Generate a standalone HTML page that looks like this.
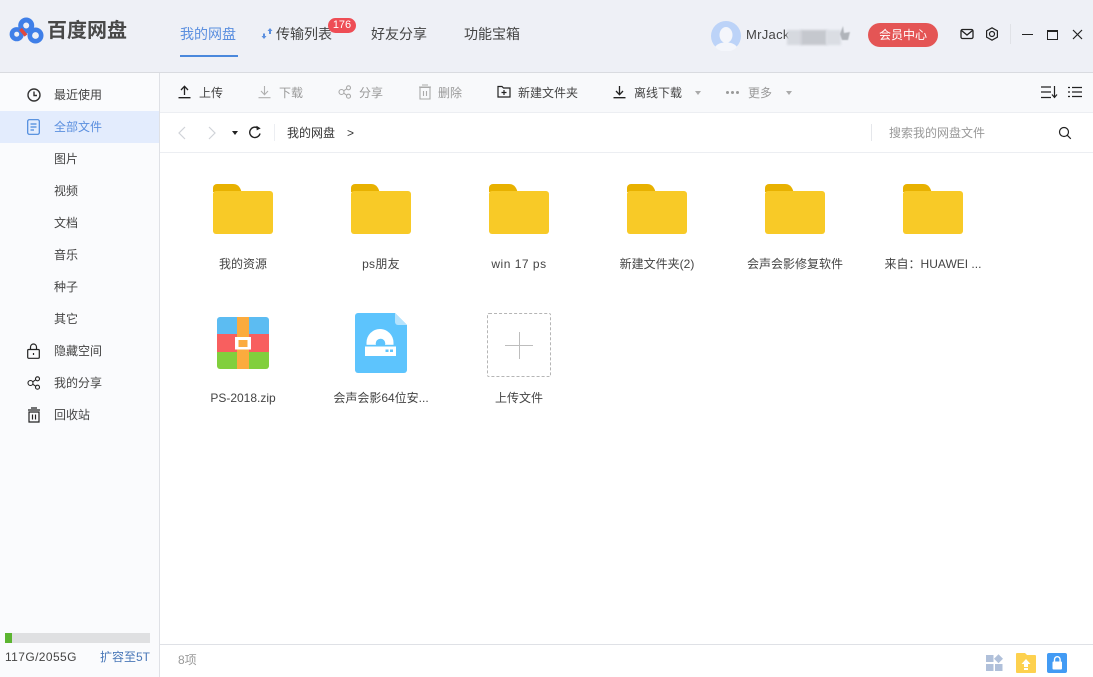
<!DOCTYPE html>
<html lang="zh-CN"><head><meta charset="utf-8"><title>百度网盘</title>
<style>
html,body{margin:0;padding:0;width:1093px;height:677px;overflow:hidden;background:#fff}
body{position:relative;font-family:"Liberation Sans","Noto Sans CJK SC",sans-serif;font-size:12px;color:#424e67}
.a,svg{position:absolute}
.t{position:absolute;white-space:nowrap;line-height:16px;color:#444}
.c{text-align:center;width:120px}
.nav{font-size:14px;line-height:18px;color:#444}
.g{color:#999}
</style></head><body>
<div class="a" style="left:0;top:0;width:1093px;height:72px;background:#eef0f6;border-bottom:1px solid #d9dbe0"></div>
<div class="a" style="left:0;top:73px;width:159px;height:604px;background:#fafbfd;border-right:1px solid #dfe1e6"></div>
<div class="a" style="left:160px;top:73px;width:933px;height:39px;background:#f8f9fb;border-bottom:1px solid #eceef2"></div>
<div class="a" style="left:160px;top:152px;width:933px;height:1px;background:#eceef2"></div>
<div class="a" style="left:160px;top:644px;width:933px;height:1px;background:#dfe1e6"></div>
<div class="a" style="left:0;top:111px;width:159px;height:32px;background:#e3ecfd"></div>

<svg style="left:9px;top:17px" width="36" height="30" viewBox="0 0 36 30" fill="none"><circle cx="7.700" cy="17.200" r="4.800" stroke="#3f7fe8" stroke-width="4.600"/><circle cx="26.500" cy="18.500" r="5.700" stroke="#3f7fe8" stroke-width="4.600"/><circle cx="17.200" cy="8.500" r="5.500" stroke="#3f7fe8" stroke-width="5"/><path d="M11.500 12l5.500 6.500" stroke="#e0483e" stroke-width="3.600"/></svg>
<div class="t" style="left:47px;top:19px;font-size:20px;line-height:24px;font-weight:bold;color:#484848">百度网盘</div>

<div class="t nav" style="left:180px;top:25px;color:#5b8fdf">我的网盘</div>
<svg style="left:261px;top:28px" width="12" height="12" viewBox="0 0 12 12" fill="#5b8fdf"><path d="M6.500 3L9 0l2.500 3H10v3H8V3zM.5 8H2V5.500h2V8h1.500L3 11z"/></svg>
<div class="t nav" style="left:276px;top:25px">传输列表</div>
<div class="a" style="left:328px;top:18px;width:28px;height:15px;border-radius:8px;background:#ee4d55;color:#fff;font-size:11px;line-height:15px;text-align:center">176</div>
<div class="t nav" style="left:371px;top:25px">好友分享</div>
<div class="t nav" style="left:464px;top:25px">功能宝箱</div>

<svg style="left:711px;top:21px" width="30" height="30" viewBox="0 0 30 30"><circle cx="15" cy="15" r="15" fill="#bcd3f8"/><ellipse cx="15" cy="14" rx="6.500" ry="8" fill="#f4f6fb"/><path d="M4 26c3-4 7-4.500 11-4.500s8 .5 11 4.500a15 15 0 0 1-22 0z" fill="#f4f6fb"/></svg>
<div class="t" style="left:746px;top:27px;font-size:13px;letter-spacing:.3px">MrJack</div>
<div class="a" style="left:787px;top:30px;width:15px;height:15px;background:#d6d9df;filter:blur(1px)"></div>
<div class="a" style="left:801px;top:30px;width:26px;height:15px;background:#c5c8ce;filter:blur(1px)"></div>
<div class="a" style="left:826px;top:30px;width:15px;height:15px;background:#dadde3;filter:blur(1px)"></div>
<svg style="left:838px;top:26px;filter:blur(.5px)" width="14" height="16" viewBox="0 0 14 16" fill="#b0b4ba"><path d="M5 0l1 7 6-1-2 8H4L2 8z"/></svg>
<div class="a" style="left:868px;top:23px;width:70px;height:24px;border-radius:12px;background:#e45555;color:#fff;font-size:12px;line-height:24px;text-align:center">会员中心</div>
<svg style="left:960px;top:28px" width="14" height="12" viewBox="0 0 14 12" fill="none" stroke="#222" stroke-width="1.300"><rect x="1" y="1.500" width="12" height="9" rx="1.500"/><path d="M1.500 2.500L7 7l5.500-4.500"/></svg>
<svg style="left:985px;top:27px" width="14" height="14" viewBox="0 0 14 14" fill="none" stroke="#222" stroke-width="1.200"><path d="M7 .8l5.400 3v6.400L7 13.200l-5.400-3V3.800z"/><circle cx="7" cy="7" r="2.500"/></svg>
<div class="a" style="left:1010px;top:24px;width:1px;height:20px;background:#e0e2e7"></div>
<div class="a" style="left:1022px;top:34px;width:11px;height:1px;background:#222"></div>
<div class="a" style="left:1047px;top:30px;width:9px;height:7px;border:1px solid #222;border-top-width:2px"></div>
<svg style="left:1072px;top:29px" width="11" height="11" viewBox="0 0 11 11" stroke="#222" stroke-width="1.200"><path d="M1 1l9 9M10 1l-9 9"/></svg>
<div class="a" style="left:180px;top:55px;width:58px;height:2px;background:#4a88dc"></div>

<svg style="left:177px;top:85px" width="15" height="14" viewBox="0 0 15 14" fill="none" stroke="#222" stroke-width="1.300"><path d="M7.500 10V1.500M4 5l3.500-3.700L11 5M1.500 12.700h12"/></svg>
<div class="t" style="left:199px;top:85px">上传</div>
<svg style="left:257px;top:85px" width="15" height="14" viewBox="0 0 15 14" fill="none" stroke="#b0b0b0" stroke-width="1.100"><path d="M7.500 1v8.500M4 6l3.500 3.700L11 6M1.500 12.700h12"/></svg>
<div class="t g" style="left:279px;top:85px">下载</div>
<svg style="left:338px;top:85px" width="14" height="14" viewBox="0 0 14 14" fill="none" stroke="#aaa" stroke-width="1.100"><circle cx="3.500" cy="7" r="2.500"/><circle cx="10.500" cy="2.800" r="2"/><circle cx="10.500" cy="11.200" r="2"/><path d="M5.700 5.800l3-2M5.700 8.200l3 2"/></svg>
<div class="t g" style="left:359px;top:85px">分享</div>
<svg style="left:418px;top:84px" width="14" height="16" viewBox="0 0 14 16" fill="none" stroke="#aaa" stroke-width="1.100"><path d="M1 3h12M4 1h6M2 3.500h10V15H2zM5.500 7v5M8.500 7v5"/></svg>
<div class="t g" style="left:438px;top:85px">删除</div>
<svg style="left:497px;top:85px" width="14" height="13" viewBox="0 0 14 13" fill="none" stroke="#222" stroke-width="1.200"><path d="M1 1.500h4l1.500 1.500H13v9H1zM7 5v5M4.500 7.500h5"/></svg>
<div class="t" style="left:518px;top:85px">新建文件夹</div>
<svg style="left:612px;top:85px" width="15" height="14" viewBox="0 0 15 14" fill="none" stroke="#222" stroke-width="1.300"><path d="M7.500 1v8.500M4 6l3.500 3.700L11 6M1.500 12.700h12"/></svg>
<div class="t" style="left:634px;top:85px">离线下载</div>
<div class="a" style="left:695px;top:91px;border:3.500px solid transparent;border-top:4px solid #aaa;border-bottom:0"></div>
<div class="a" style="left:726px;top:91px;width:3px;height:3px;border-radius:2px;background:#999;box-shadow:5px 0 #999,10px 0 #999"></div>
<div class="t g" style="left:748px;top:85px">更多</div>
<div class="a" style="left:786px;top:91px;border:3.500px solid transparent;border-top:4px solid #aaa;border-bottom:0"></div>
<svg style="left:1040px;top:85px" width="18" height="14" viewBox="0 0 18 14" fill="none" stroke="#222" stroke-width="1.200"><path d="M1 2h10M1 7h10M1 12.500h10M14.500 1v11M12 9.500l2.500 3 2.500-3"/></svg>
<svg style="left:1068px;top:86px" width="14" height="12" viewBox="0 0 14 12" fill="none" stroke="#222" stroke-width="1.200"><path d="M0 1.500h2M4 1.500h10M0 6h2M4 6h10M0 10.500h2M4 10.500h10"/></svg>

<svg style="left:177px;top:126px" width="10" height="14" viewBox="0 0 10 14" fill="none" stroke="#d0d3d8" stroke-width="1.200"><path d="M8 1L2 7l6 6"/></svg>
<svg style="left:207px;top:126px" width="10" height="14" viewBox="0 0 10 14" fill="none" stroke="#d0d3d8" stroke-width="1.200"><path d="M2 1l6 6-6 6"/></svg>
<div class="a" style="left:232px;top:131px;border:3px solid transparent;border-top:4px solid #222;border-bottom:0"></div>
<svg style="left:248px;top:125px" width="14" height="14" viewBox="0 0 14 14" fill="none" stroke="#222" stroke-width="1.400"><path d="M12 8.500A5.200 5.200 0 1 1 9.800 3"/><path d="M8.500.8l4.200 2.600-4 2z" fill="#222" stroke="none"/></svg>
<div class="a" style="left:274px;top:124px;width:1px;height:17px;background:#eceef2"></div>
<div class="t" style="left:287px;top:125px;color:#333">我的网盘</div>
<div class="t" style="left:347px;top:125px;color:#333">&gt;</div>
<div class="a" style="left:871px;top:124px;width:1px;height:17px;background:#e5e7eb"></div>
<div class="t g" style="left:889px;top:125px">搜索我的网盘文件</div>
<svg style="left:1058px;top:126px" width="14" height="14" viewBox="0 0 14 14" fill="none" stroke="#222" stroke-width="1.200"><circle cx="6" cy="6" r="4.500"/><path d="M9.300 9.300l3.500 3.500"/></svg>

<svg style="left:27px;top:88px" width="14" height="14" viewBox="0 0 14 14" fill="none" stroke="#333" stroke-width="1.400"><circle cx="7" cy="7" r="6"/><path d="M7 3.500V7.500H10"/></svg>
<div class="t" style="left:54px;top:87px">最近使用</div>
<svg style="left:27px;top:119px" width="13" height="16" viewBox="0 0 13 16" fill="none" stroke="#4a88dc" stroke-width="1.200"><rect x=".7" y=".7" width="11.600" height="14.600" rx="1.500"/><path d="M3.500 5h6M3.500 8h6M3.500 11h3.500"/></svg>
<div class="t" style="left:54px;top:119px;color:#5b8fdf">全部文件</div>
<div class="t" style="left:54px;top:151px">图片</div>
<div class="t" style="left:54px;top:183px">视频</div>
<div class="t" style="left:54px;top:215px">文档</div>
<div class="t" style="left:54px;top:247px">音乐</div>
<div class="t" style="left:54px;top:279px">种子</div>
<div class="t" style="left:54px;top:311px">其它</div>
<svg style="left:27px;top:343px" width="13" height="16" viewBox="0 0 13 16" fill="none" stroke="#222" stroke-width="1.200"><rect x=".7" y="6.500" width="11.600" height="8.800" rx="1"/><path d="M3.500 6.500V4a3 3 0 0 1 6 0v2.500M6.500 10v2"/></svg>
<div class="t" style="left:54px;top:343px">隐藏空间</div>
<svg style="left:27px;top:376px" width="14" height="14" viewBox="0 0 14 14" fill="none" stroke="#222" stroke-width="1.100"><circle cx="3.500" cy="7" r="2.500"/><circle cx="10.500" cy="2.800" r="2"/><circle cx="10.500" cy="11.200" r="2"/><path d="M5.700 5.800l3-2M5.700 8.200l3 2"/></svg>
<div class="t" style="left:54px;top:375px">我的分享</div>
<svg style="left:27px;top:407px" width="14" height="16" viewBox="0 0 14 16" fill="none" stroke="#222" stroke-width="1.200"><path d="M1 3h12M4 1h6M2 5h10v10H2zM5.500 7.500v5M8.500 7.500v5"/></svg>
<div class="t" style="left:54px;top:407px">回收站</div>

<div class="a" style="left:5px;top:633px;width:145px;height:10px;background:#dfe0e2"></div>
<div class="a" style="left:5px;top:633px;width:7px;height:10px;background:#5cb531"></div>
<div class="t" style="left:5px;top:649px;color:#444;letter-spacing:.4px">117G/2055G</div>
<div class="t" style="left:100px;top:649px;color:#4a78b8">扩容至5T</div>
<div class="t g" style="left:178px;top:652px">8项</div>

<svg width="0" height="0" style="left:0;top:0"><defs><g id="f"><path d="M0 4a4 4 0 0 1 4-4h16c4 0 7 2 8.500 8H0z" fill="#e8b100"/><rect y="7" width="60" height="43" rx="3" fill="#f8ca27"/></g></defs></svg>
<svg style="left:213px;top:184px" width="60" height="50"><use href="#f"/></svg>
<svg style="left:351px;top:184px" width="60" height="50"><use href="#f"/></svg>
<svg style="left:489px;top:184px" width="60" height="50"><use href="#f"/></svg>
<svg style="left:627px;top:184px" width="60" height="50"><use href="#f"/></svg>
<svg style="left:765px;top:184px" width="60" height="50"><use href="#f"/></svg>
<svg style="left:903px;top:184px" width="60" height="50"><use href="#f"/></svg>

<div class="t c" style="left:183px;top:256px">我的资源</div>
<div class="t c" style="left:321px;top:256px;letter-spacing:.3px">ps朋友</div>
<div class="t c" style="left:459px;top:256px;letter-spacing:.5px">win 17 ps</div>
<div class="t c" style="left:597px;top:256px">新建文件夹(2)</div>
<div class="t c" style="left:735px;top:256px">会声会影修复软件</div>
<div class="t c" style="left:873px;top:256px">来自：HUAWEI ...</div>

<svg style="left:217px;top:317px" width="52" height="52" viewBox="0 0 52 52"><path d="M0 17V3a3 3 0 0 1 3-3h46a3 3 0 0 1 3 3v14z" fill="#5cbcf2"/><rect y="17" width="52" height="18" fill="#f85f5f"/><path d="M0 35h52v14a3 3 0 0 1-3 3H3a3 3 0 0 1-3-3z" fill="#81cf3d"/><rect x="20" width="12" height="52" fill="#fbab3e"/><rect x="18" y="20" width="16" height="12.500" fill="#fff"/><rect x="21.500" y="23" width="9" height="7" fill="#fbab3e"/></svg>
<svg style="left:355px;top:313px" width="52" height="60" viewBox="0 0 52 60"><path d="M3 0h37l12 12v45a3 3 0 0 1-3 3H3a3 3 0 0 1-3-3V3a3 3 0 0 1 3-3z" fill="#5dc4fd"/><path d="M40 0l12 12H43a3 3 0 0 1-3-3z" fill="#b5e3fd"/><path d="M11.500 32v-2.500a13.500 13.500 0 0 1 27 0V32z" fill="#fff"/><circle cx="25.500" cy="30.500" r="4.800" fill="#5dc4fd"/><rect x="10" y="31.800" width="31" height="1.700" fill="#5dc4fd"/><rect x="10" y="33.500" width="31" height="9.500" fill="#fff"/><rect x="30.500" y="36.500" width="3" height="2.500" fill="#5dc4fd"/><rect x="35" y="36.500" width="3" height="2.500" fill="#5dc4fd"/></svg>
<div class="a" style="left:487px;top:313px;width:62px;height:62px;border:1px dashed #b5b5b5;border-radius:2px"></div>
<div class="a" style="left:505px;top:345px;width:28px;height:1px;background:#bdbdbd"></div>
<div class="a" style="left:519px;top:332px;width:1px;height:27px;background:#bdbdbd"></div>
<div class="t c" style="left:183px;top:390px">PS-2018.zip</div>
<div class="t c" style="left:321px;top:390px">会声会影64位安...</div>
<div class="t c" style="left:459px;top:390px">上传文件</div>

<svg style="left:986px;top:654px" width="18" height="18" viewBox="0 0 18 18" fill="#b0c0da"><rect y="1" width="7.500" height="7"/><path d="M12.500 .2l4.500 4.500-4.500 4.500L8 4.700z"/><rect y="10" width="7.500" height="7"/><rect x="9" y="10" width="7.500" height="7"/></svg>
<svg style="left:1016px;top:653px" width="20" height="20" viewBox="0 0 20 20"><path d="M0 1a1 1 0 0 1 1-1h8l2 2h8a1 1 0 0 1 1 1v16a1 1 0 0 1-1 1H1a1 1 0 0 1-1-1z" fill="#fdd14f"/><path d="M10 6l4.500 5H12v3H8v-3H5.500zM8 15h4v2H8z" fill="#fff"/></svg>
<svg style="left:1047px;top:653px" width="20" height="20" viewBox="0 0 20 20"><rect width="20" height="20" rx="2" fill="#429bf4"/><rect x="5.500" y="8.500" width="9.500" height="8" rx="1" fill="#fff"/><path d="M7.500 9V6.500a2.800 2.800 0 0 1 5.600 0V9" fill="none" stroke="#fff" stroke-width="1.400"/></svg>
</body></html>
